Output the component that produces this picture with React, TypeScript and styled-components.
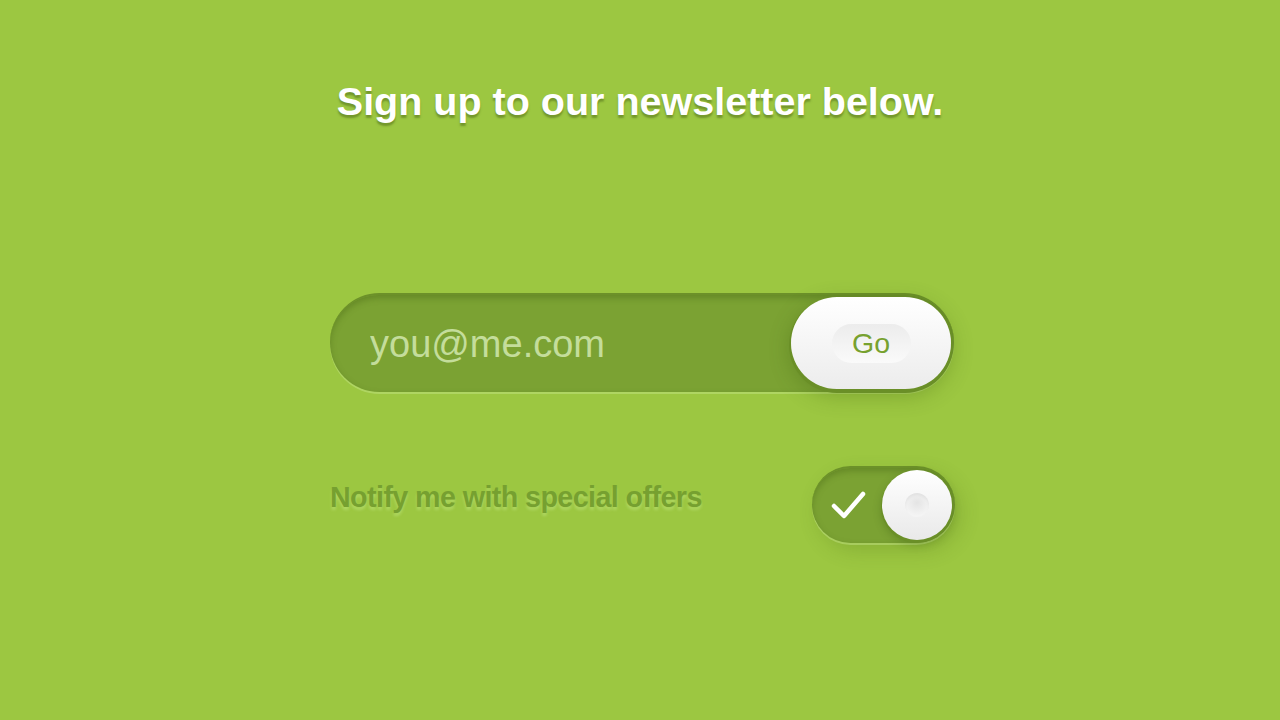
import React from "react";
import styled, { createGlobalStyle } from "styled-components";

const Global = createGlobalStyle`
  html, body { margin: 0; padding: 0; }
  body {
    background: #9cc741;
    font-family: "Liberation Sans", Arial, sans-serif;
    width: 1280px;
    height: 720px;
    overflow: hidden;
  }
`;

const Page = styled.main`
  display: flex;
  flex-direction: column;
  align-items: center;
  padding-top: 78px;
  padding-left: 4px;
`;

const Heading = styled.h1`
  margin: 0;
  font-size: 39.5px;
  font-weight: 700;
  color: #fff;
  line-height: 46px;
  text-shadow: 0 3px 2px rgba(80, 110, 25, 0.55);
  margin-left: -4px;
`;

const Form = styled.form`
  width: 624px;
  margin-top: 169px;
  display: flex;
  flex-direction: column;
  gap: 74px;
`;

const Pill = styled.div`
  height: 99px;
  box-sizing: border-box;
  border-radius: 50px;
  background: #7ba233;
  border-top: 2px solid #6c9129;
  box-shadow: inset 0 3px 6px rgba(60, 90, 15, 0.35),
    0 2px 0 rgba(200, 230, 140, 0.45);
  display: flex;
  align-items: center;
  padding: 0 3px 0 40px;
`;

const Email = styled.input`
  flex: 1;
  min-width: 0;
  background: transparent;
  border: none;
  outline: none;
  font-family: "Liberation Sans", Arial, sans-serif;
  font-size: 38px;
  color: #fff;
  padding: 0;
  margin-top: 2px;
  &::placeholder { color: #c4dd9b; }
`;

const GoButton = styled.button`
  width: 160px;
  height: 92px;
  border-radius: 46px;
  border: none;
  background: linear-gradient(#ffffff, #ececec);
  box-shadow: 0 2px 0 2px #6a8f27, 0 6px 22px rgba(50, 80, 10, 0.3);
  display: flex;
  align-items: center;
  justify-content: center;
  padding: 0;
  cursor: pointer;
  margin-top: -1px;
`;

const GoLabel = styled.span`
  width: 79px;
  height: 39px;
  border-radius: 20px;
  background: linear-gradient(#ececec, #fafafa);
  display: flex;
  align-items: center;
  justify-content: center;
  font-family: "Liberation Sans", Arial, sans-serif;
  font-size: 28.5px;
  color: #77a12f;
`;

const Row = styled.div`
  display: flex;
  align-items: center;
  justify-content: space-between;
`;

const Label = styled.label`
  font-size: 28.6px;
  letter-spacing: -0.55px;
  font-weight: 700;
  color: #76a030;
  text-shadow: 0 3px 3px rgba(200, 235, 140, 0.45);
  margin-top: -14px;
`;

const Toggle = styled.div`
  width: 143px;
  height: 77px;
  box-sizing: border-box;
  border-radius: 39px;
  background: #7ba233;
  border-top: 2px solid #6c9129;
  box-shadow: inset 0 3px 6px rgba(60, 90, 15, 0.35),
    0 2px 0 rgba(200, 230, 140, 0.45), 6px 8px 20px rgba(60, 90, 15, 0.2);
  display: flex;
  align-items: center;
  justify-content: space-between;
  padding: 0 3px 0 18px;
  margin-right: -1px;
`;

const Knob = styled.div`
  width: 70px;
  height: 70px;
  border-radius: 50%;
  background: linear-gradient(#ffffff, #e9e9e9);
  box-shadow: 0 2px 0 1px #6a8f27, 0 4px 10px rgba(40, 70, 10, 0.3);
  display: flex;
  align-items: center;
  justify-content: center;
  margin-top: -2px;
`;

const Dimple = styled.div`
  width: 24px;
  height: 24px;
  border-radius: 50%;
  background: radial-gradient(circle at 50% 40%, #e4e4e4, #f4f4f4 70%);
  box-shadow: inset 0 2px 3px rgba(0, 0, 0, 0.06);
`;

const Check = () => (
  <svg width="38" height="34" viewBox="0 0 38 34" fill="none">
    <path
      d="M4 17 L14 27 L33 5"
      stroke="#ffffff"
      strokeWidth="4.5"
      strokeLinecap="round"
      strokeLinejoin="round"
    />
  </svg>
);

export default function App() {
  return (
    <>
      <Global />
      <Page>
        <Heading>Sign up to our newsletter below.</Heading>
        <Form onSubmit={(e) => e.preventDefault()}>
          <Pill>
            <Email type="email" placeholder="you@me.com" />
            <GoButton type="submit">
              <GoLabel>Go</GoLabel>
            </GoButton>
          </Pill>
          <Row>
            <Label>Notify me with special offers</Label>
            <Toggle>
              <Check />
              <Knob>
                <Dimple />
              </Knob>
            </Toggle>
          </Row>
        </Form>
      </Page>
    </>
  );
}
